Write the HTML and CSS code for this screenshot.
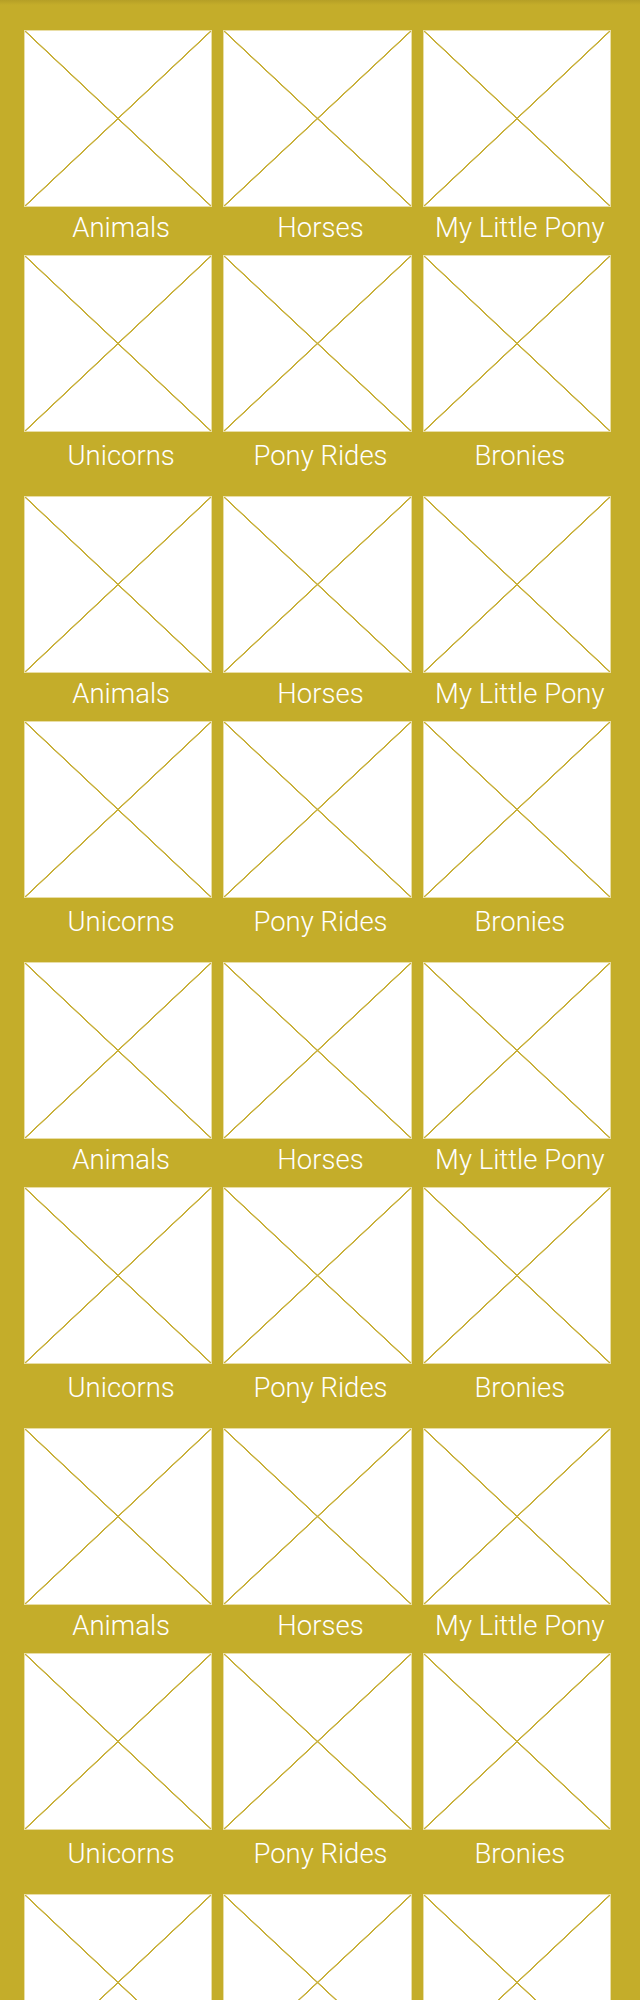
FILE: index.html
```html
<!DOCTYPE html>
<html lang="en">
<head>
<meta charset="utf-8">
<title>Categories</title>
<link rel="stylesheet" href="styles.css">
</head>
<body>
<main class="page">
  <section class="group">
    <div class="grid">
      <div class="tile"><div class="ph"></div><div class="label label-a">Animals</div></div>
      <div class="tile"><div class="ph"></div><div class="label label-a">Horses</div></div>
      <div class="tile"><div class="ph"></div><div class="label label-a">My Little Pony</div></div>
      <div class="tile"><div class="ph"></div><div class="label label-b">Unicorns</div></div>
      <div class="tile"><div class="ph"></div><div class="label label-b">Pony Rides</div></div>
      <div class="tile"><div class="ph"></div><div class="label label-b">Bronies</div></div>
    </div>
  </section>
  <section class="group">
    <div class="grid">
      <div class="tile"><div class="ph"></div><div class="label label-a">Animals</div></div>
      <div class="tile"><div class="ph"></div><div class="label label-a">Horses</div></div>
      <div class="tile"><div class="ph"></div><div class="label label-a">My Little Pony</div></div>
      <div class="tile"><div class="ph"></div><div class="label label-b">Unicorns</div></div>
      <div class="tile"><div class="ph"></div><div class="label label-b">Pony Rides</div></div>
      <div class="tile"><div class="ph"></div><div class="label label-b">Bronies</div></div>
    </div>
  </section>
  <section class="group">
    <div class="grid">
      <div class="tile"><div class="ph"></div><div class="label label-a">Animals</div></div>
      <div class="tile"><div class="ph"></div><div class="label label-a">Horses</div></div>
      <div class="tile"><div class="ph"></div><div class="label label-a">My Little Pony</div></div>
      <div class="tile"><div class="ph"></div><div class="label label-b">Unicorns</div></div>
      <div class="tile"><div class="ph"></div><div class="label label-b">Pony Rides</div></div>
      <div class="tile"><div class="ph"></div><div class="label label-b">Bronies</div></div>
    </div>
  </section>
  <section class="group">
    <div class="grid">
      <div class="tile"><div class="ph"></div><div class="label label-a">Animals</div></div>
      <div class="tile"><div class="ph"></div><div class="label label-a">Horses</div></div>
      <div class="tile"><div class="ph"></div><div class="label label-a">My Little Pony</div></div>
      <div class="tile"><div class="ph"></div><div class="label label-b">Unicorns</div></div>
      <div class="tile"><div class="ph"></div><div class="label label-b">Pony Rides</div></div>
      <div class="tile"><div class="ph"></div><div class="label label-b">Bronies</div></div>
    </div>
  </section>
  <section class="group">
    <div class="grid">
      <div class="tile"><div class="ph"></div></div>
      <div class="tile"><div class="ph"></div></div>
      <div class="tile"><div class="ph"></div></div>
    </div>
  </section>
</main>
</body>
</html>
```
FILE: styles.css
```css
html {
  background: #c4ad2a;
}

body {
  margin: 0;
  height: 2000px;
  overflow: hidden;
  background: linear-gradient(to bottom, #b59f26 0, #c4ad2a 5px) no-repeat;
  font-family: Roboto, "Liberation Sans", sans-serif;
}

.page {
  width: 587px;
  padding: 30px 0 0 24px;
}

.grid {
  display: grid;
  grid-template-columns: repeat(3, 1fr);
  column-gap: 11px;
}

.tile {
  display: flex;
  flex-direction: column;
}

.ph {
  height: 177px;
  box-sizing: border-box;
  border: 1px solid #e9dea6;
  background-color: #ffffff;
  background-image:
    linear-gradient(to top right, transparent calc(50% - 0.9px), #c8b03a calc(50% - 0.5px), #c8b03a calc(50% + 0.5px), transparent calc(50% + 0.9px)),
    linear-gradient(to bottom right, transparent calc(50% - 0.9px), #c8b03a calc(50% - 0.5px), #c8b03a calc(50% + 0.5px), transparent calc(50% + 0.9px));
}

.label {
  color: #ffffff;
  font-size: 27.5px;
  font-weight: 300;
  text-align: center;
  white-space: nowrap;
  line-height: 30px;
  box-sizing: border-box;
  padding-left: 6px;
}

.label-a {
  height: 48px;
  padding-top: 6px;
}

.label-b {
  height: 64px;
  padding-top: 9px;
}
```
